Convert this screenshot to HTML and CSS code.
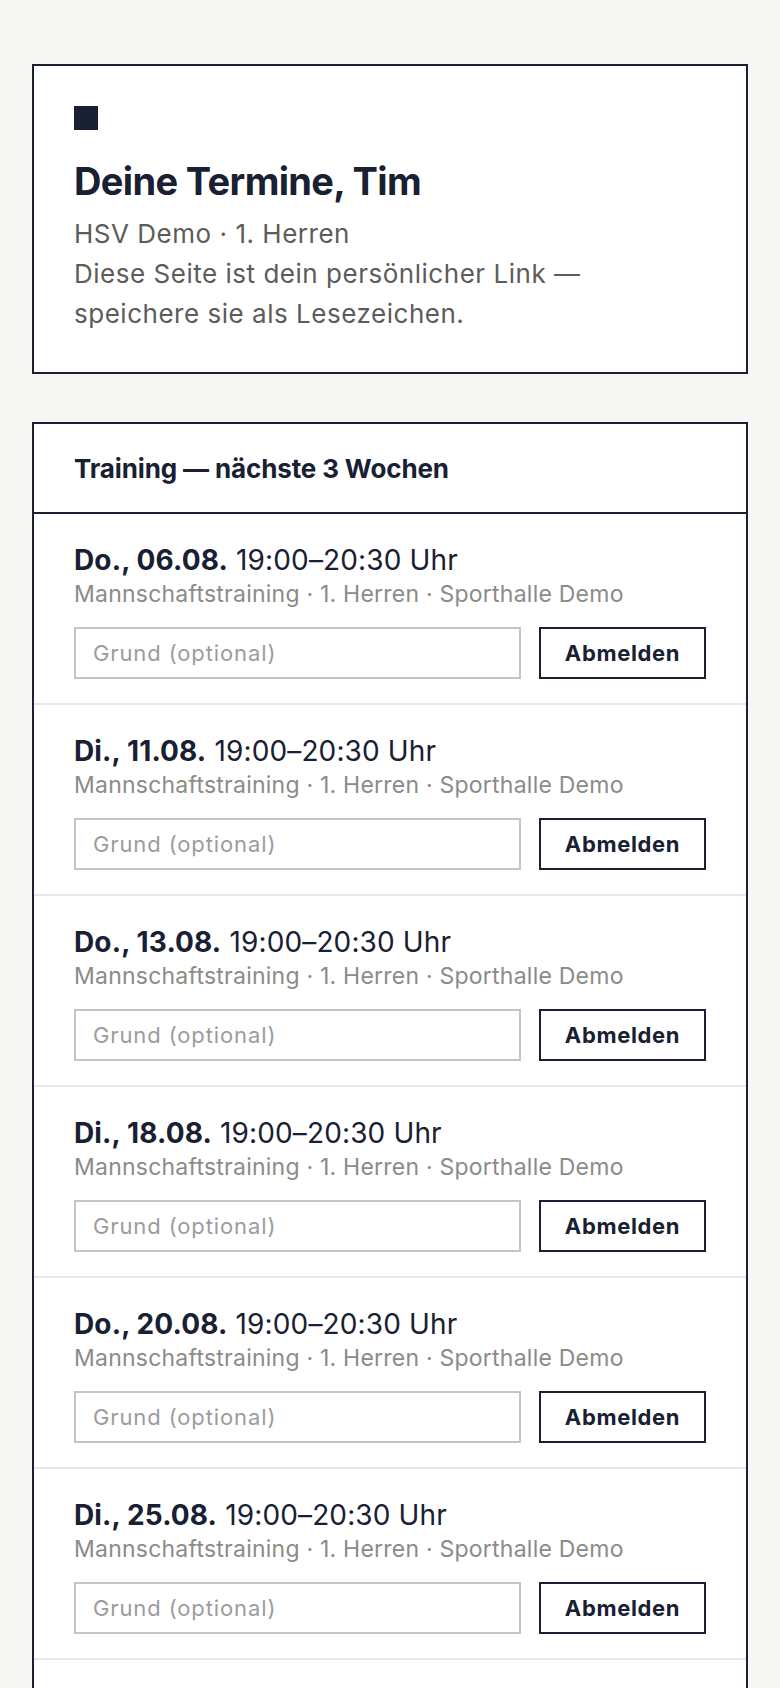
FILE: index.html
```html
<!DOCTYPE html>
<html lang="de">
<head>
<meta charset="utf-8">
<title>Deine Termine</title>
<link rel="stylesheet" href="styles.css">
</head>
<body>
<main class="page">
  <section class="card intro">
    <div class="mark"></div>
    <h1 class="title">Deine Termine, Tim</h1>
    <p class="sub">HSV Demo · 1. Herren<br>Diese Seite ist dein persönlicher Link — speichere sie als Lesezeichen.</p>
  </section>

  <section class="card list">
    <h2 class="list-head">Training — nächste 3 Wochen</h2>
    <div class="row">
      <div class="when"><strong>Do., 06.08.</strong> 19:00–20:30 Uhr</div>
      <div class="meta">Mannschaftstraining · 1. Herren · Sporthalle Demo</div>
      <div class="actions"><input class="reason" type="text" placeholder="Grund (optional)"><button class="btn">Abmelden</button></div>
    </div>
    <div class="row">
      <div class="when"><strong>Di., 11.08.</strong> 19:00–20:30 Uhr</div>
      <div class="meta">Mannschaftstraining · 1. Herren · Sporthalle Demo</div>
      <div class="actions"><input class="reason" type="text" placeholder="Grund (optional)"><button class="btn">Abmelden</button></div>
    </div>
    <div class="row">
      <div class="when"><strong>Do., 13.08.</strong> 19:00–20:30 Uhr</div>
      <div class="meta">Mannschaftstraining · 1. Herren · Sporthalle Demo</div>
      <div class="actions"><input class="reason" type="text" placeholder="Grund (optional)"><button class="btn">Abmelden</button></div>
    </div>
    <div class="row">
      <div class="when"><strong>Di., 18.08.</strong> 19:00–20:30 Uhr</div>
      <div class="meta">Mannschaftstraining · 1. Herren · Sporthalle Demo</div>
      <div class="actions"><input class="reason" type="text" placeholder="Grund (optional)"><button class="btn">Abmelden</button></div>
    </div>
    <div class="row">
      <div class="when"><strong>Do., 20.08.</strong> 19:00–20:30 Uhr</div>
      <div class="meta">Mannschaftstraining · 1. Herren · Sporthalle Demo</div>
      <div class="actions"><input class="reason" type="text" placeholder="Grund (optional)"><button class="btn">Abmelden</button></div>
    </div>
    <div class="row">
      <div class="when"><strong>Di., 25.08.</strong> 19:00–20:30 Uhr</div>
      <div class="meta">Mannschaftstraining · 1. Herren · Sporthalle Demo</div>
      <div class="actions"><input class="reason" type="text" placeholder="Grund (optional)"><button class="btn">Abmelden</button></div>
    </div>
    <div class="row">
      <div class="when"><strong>Do., 27.08.</strong> 19:00–20:30 Uhr</div>
      <div class="meta">Mannschaftstraining · 1. Herren · Sporthalle Demo</div>
      <div class="actions"><input class="reason" type="text" placeholder="Grund (optional)"><button class="btn">Abmelden</button></div>
    </div>
  </section>
</main>
</body>
</html>
```

FILE: styles.css
```css
* { box-sizing: border-box; }

html, body {
  margin: 0;
  padding: 0;
  background: #f6f6f4;
}

body {
  font-family: Inter, "Noto Sans", "Liberation Sans", sans-serif;
  color: #182032;
}

.page {
  padding: 64px 32px 48px;
  display: flex;
  flex-direction: column;
  gap: 48px;
}

.card {
  background: #ffffff;
  border: 2px solid #182032;
}

.intro {
  padding: 40px 40px 38px;
}

.mark {
  width: 24px;
  height: 24px;
  background: #182032;
  margin-bottom: 27px;
}

.title {
  margin: 0;
  font-size: 38px;
  line-height: 48px;
  font-weight: 700;
  letter-spacing: -0.017em;
}

.sub {
  margin: 9px 0 0;
  font-size: 26px;
  line-height: 40px;
  color: #5c5c58;
  letter-spacing: 0.02em;
}

.list-head {
  margin: 0;
  height: 90px;
  padding: 0 40px;
  display: flex;
  align-items: center;
  font-size: 26px;
  font-weight: 700;
  letter-spacing: -0.005em;
  border-bottom: 2px solid #182032;
}

.row {
  padding: 28px 40px 24px;
  border-bottom: 2px solid #e7e7e7;
}

.when {
  font-size: 28px;
  line-height: 36px;
  letter-spacing: 0.005em;
}

.when strong {
  font-weight: 700;
}

.meta {
  font-size: 23px;
  line-height: 32px;
  color: #8b8b87;
  letter-spacing: 0.01em;
}

.actions {
  margin-top: 17px;
  display: flex;
  align-items: center;
  gap: 18px;
}

.reason {
  flex: 1;
  min-width: 0;
  height: 52px;
  border: 2px solid #c2c4c7;
  border-radius: 0;
  padding: 0 17px;
  font-family: inherit;
  font-size: 22px;
  letter-spacing: 0.04em;
  color: #182032;
  background: #ffffff;
  outline: none;
}

.reason::placeholder {
  color: #9b9c9d;
}

.btn {
  width: 167px;
  height: 52px;
  border: 2px solid #182032;
  border-radius: 0;
  background: #ffffff;
  color: #182032;
  font-family: inherit;
  font-size: 22px;
  font-weight: 700;
  letter-spacing: 0.03em;
  padding: 0;
  cursor: pointer;
}
```
